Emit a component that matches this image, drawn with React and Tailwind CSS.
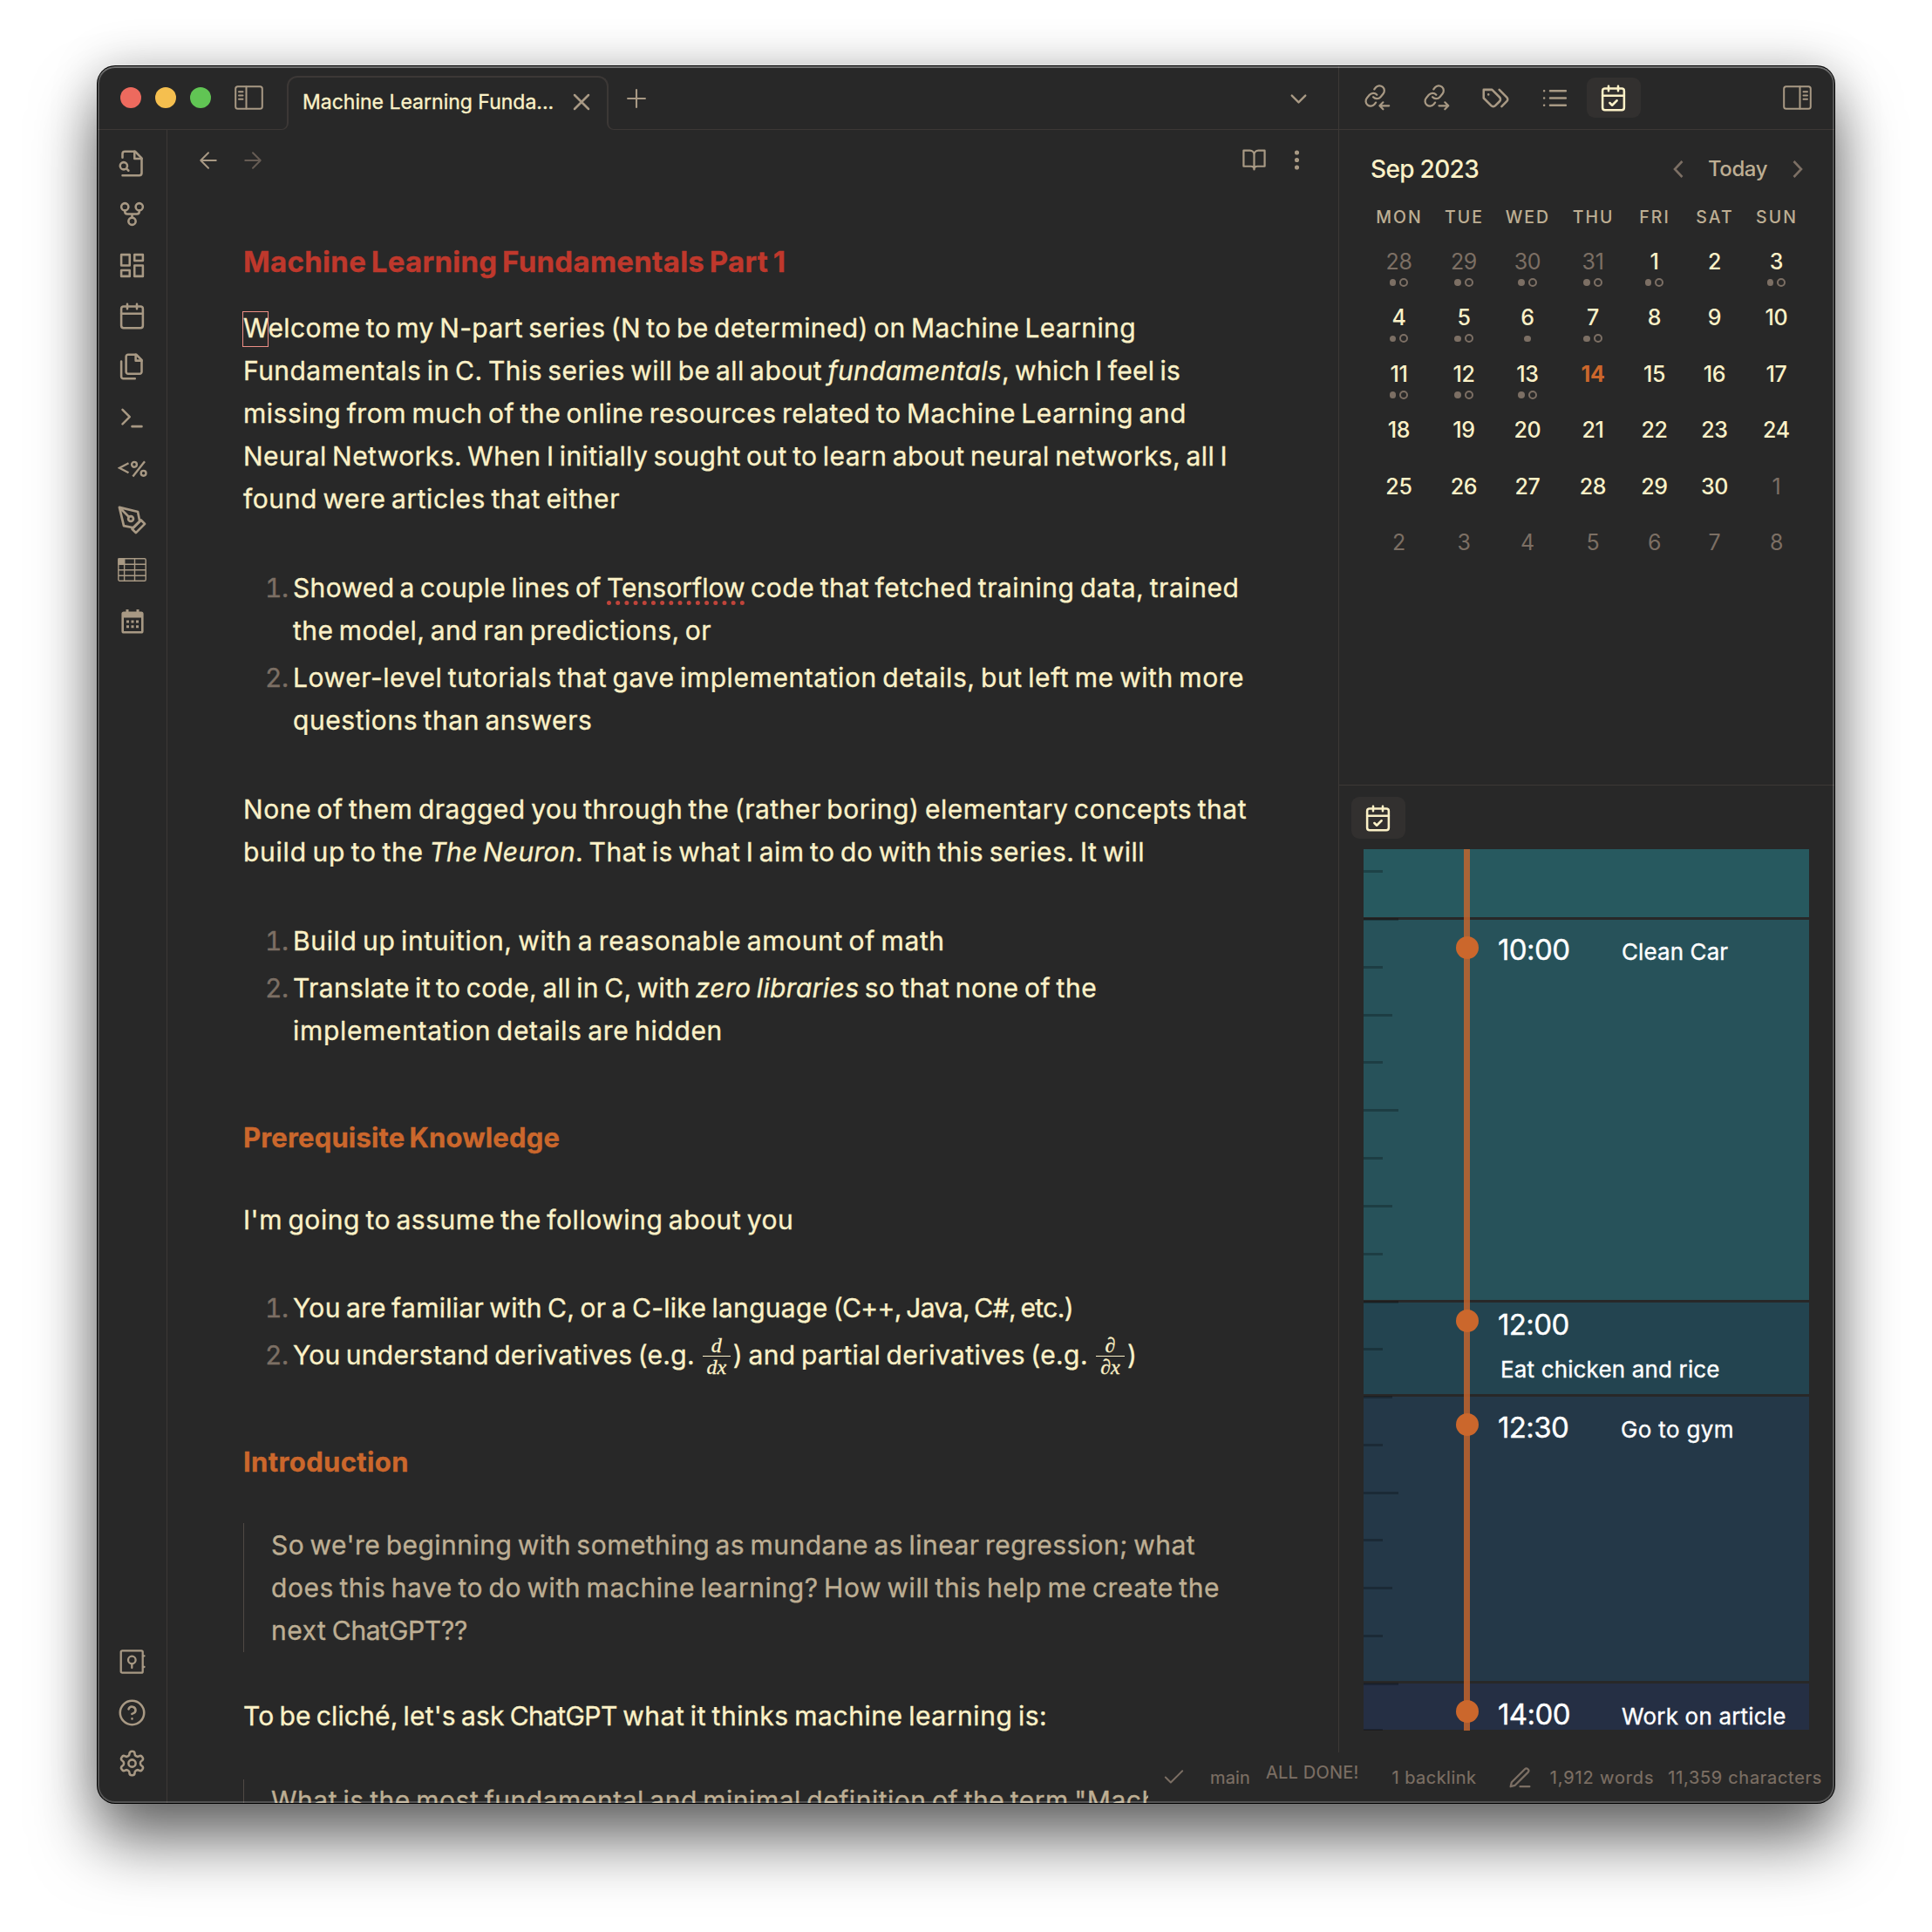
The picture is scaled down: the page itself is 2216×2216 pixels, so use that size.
import React from 'react';

const Svg = ({ size = 33, sw = 1.85, children, className = '', ...rest }) => (
  <svg width={size} height={size} viewBox="0 0 24 24" fill="none" stroke="currentColor" strokeWidth={sw} strokeLinecap="round" strokeLinejoin="round" className={`shrink-0 ${className}`} {...rest}>
    {children}
  </svg>
);

const CalendarBase = () => (
  <>
    <rect x="3" y="4" width="18" height="18" rx="2" />
    <path d="M16 2v4M8 2v4M3 10h18" />
  </>
);

const CalendarCheck = () => (
  <Svg className="-ml-px">
    <CalendarBase />
    <path d="m9 16 2 2 4-4" />
  </Svg>
);

const LinkArrow = ({ out }) => (
  <svg width="30" height="28" viewBox="0 0 30 28" fill="none" stroke="currentColor" strokeWidth="2.2" strokeLinecap="round" strokeLinejoin="round" className="-ml-[2px] overflow-visible">
    <g transform="translate(13.2 12) rotate(-5) scale(1.12) translate(-12 -12)" strokeWidth="2">
      <path d="M10 13a5 5 0 0 0 7.54.54l3-3a5 5 0 0 0-7.07-7.07l-1.72 1.71" />
      <path d="M14 11a5 5 0 0 0-7.54-.54l-3 3a5 5 0 0 0 7.07 7.07l1.71-1.71" />
    </g>
    {out ? <path d="M18.5 23.3H29M25.3 19.3l4 4-4 4" /> : <path d="M18.7 23.3h10.500M22.400 19.300l-4 4 4 4" />}
  </svg>
);

const PanelIcon = ({ right }) => (
  <svg width="33" height="28" viewBox="0 0 33 28" fill="none" stroke="currentColor" strokeWidth="2" strokeLinecap="round">
    <g transform={right ? 'translate(33 0) scale(-1 1)' : undefined}>
      <rect x="1.2" y="1.2" width="30.6" height="25.6" rx="2.5" />
      <path d="M13.5 1.5v25" />
      <path d="M5 7.3h4.5M5 11.6h4.5M5 15.8h4.5" />
    </g>
  </svg>
);

const ribbonTop = [
  <Svg key="search">
    <path d="M4 22h14a2 2 0 0 0 2-2V7.5L14.5 2H6a2 2 0 0 0-2 2v3" />
    <path d="M14 2v6h6" />
    <circle cx="5" cy="14" r="3" />
    <path d="m9 18-1.5-1.5" />
  </Svg>,
  <Svg key="fork">
    <circle cx="12" cy="18" r="3" />
    <circle cx="6" cy="6" r="3" />
    <circle cx="18" cy="6" r="3" />
    <path d="M18 9v1a2 2 0 0 1-2 2H8a2 2 0 0 1-2-2V9M12 12v3" />
  </Svg>,
  <Svg key="board">
    <rect x="3" y="3" width="7" height="9" />
    <rect x="14" y="3" width="7" height="5" />
    <rect x="14" y="12" width="7" height="9" />
    <rect x="3" y="16" width="7" height="5" />
  </Svg>,
  <Svg key="cal"><CalendarBase /></Svg>,
  <Svg key="files">
    <path d="M15.5 2H8.6c-.4 0-.8.2-1.1.5-.3.3-.5.7-.5 1.1v12.8c0 .4.2.8.5 1.1.3.3.7.5 1.1.5h9.8c.4 0 .8-.2 1.1-.5.3-.3.5-.7.5-1.1V6.5L15.5 2z" />
    <path d="M3 7.6v12.8c0 .4.2.8.5 1.1.3.3.7.5 1.1.5h9.8M15 2v5h5" />
  </Svg>,
  <Svg key="term"><path d="m4 17 6-6-6-6M12 19h8" /></Svg>,
  <svg key="tmpl" width="34" height="20" viewBox="0 0 34 20" fill="none" stroke="currentColor" strokeWidth="2.4">
    <path d="M12.5 3.2 2 8.7l10.5 5.5" />
    <circle cx="19" cy="4.8" r="2.9" />
    <circle cx="29.6" cy="14.8" r="2.9" />
    <path d="M31 1.2 17.4 18.6" />
  </svg>,
  <Svg key="pen" size={35}>
    <path d="m12 19 7-7 3 3-7 7-3-3z" />
    <path d="M18 13l-1.5-7.5L2 2l3.5 14.5L13 18l5-5zM2 2l7.586 7.586" />
    <circle cx="11" cy="11" r="2" />
  </Svg>,
  <svg key="table" width="33" height="27" viewBox="0 0 33 27" fill="none" stroke="currentColor" strokeWidth="1.4" className="relative -top-[1px]">
    <rect x="0.8" y="0.8" width="31.4" height="25.4" rx="1.5" />
    <path d="M1 1h6.5v6H1z" fill="currentColor" />
    <path d="M7.6 1v25M19.5 1v25M1 7.2h31M1 13.8h31M1 20.2h31" />
  </svg>,
  <svg key="cal2" width="26" height="28" viewBox="0 0 26 28" fill="currentColor">
    <path fillRule="evenodd" d="M5.5 0h3v2.5h9V0h3v2.5H23a2.6 2.6 0 0 1 2.6 2.6V25A2.6 2.6 0 0 1 23 27.6H3A2.6 2.6 0 0 1 .4 25V5.1A2.6 2.6 0 0 1 3 2.5h2.5zM3 9.5V25h20V9.5z" />
    <path d="M6 12.5h3v3H6zM11.5 12.5h3v3h-3zM17 12.5h3v3h-3zM6 18.3h3v3H6zM11.5 18.3h3v3h-3zM17 18.3h3v3h-3z" />
  </svg>,
];

const ribbonBottom = [
  <svg key="vault" width="30" height="28" viewBox="0 0 30 28" fill="none" stroke="currentColor" strokeWidth="2.3" strokeLinecap="round" strokeLinejoin="round">
    <rect x="1.7" y="1.3" width="25" height="25.4" rx="1.5" />
    <circle cx="14.3" cy="12" r="4.3" />
    <path d="M14.3 16.5v4.5M27 7.3h1.5M27 20h1.5" />
  </svg>,
  <Svg key="help">
    <circle cx="12" cy="12" r="10" />
    <path d="M9.09 9a3 3 0 0 1 5.83 1c0 2-3 3-3 3M12 17h.01" />
  </Svg>,
  <Svg key="gear">
    <path d="M12.22 2h-.44a2 2 0 0 0-2 2v.18a2 2 0 0 1-1 1.73l-.43.25a2 2 0 0 1-2 0l-.15-.08a2 2 0 0 0-2.73.73l-.22.38a2 2 0 0 0 .73 2.73l.15.1a2 2 0 0 1 1 1.72v.51a2 2 0 0 1-1 1.74l-.15.09a2 2 0 0 0-.73 2.73l.22.38a2 2 0 0 0 2.73.73l.15-.08a2 2 0 0 1 2 0l.43.25a2 2 0 0 1 1 1.73V20a2 2 0 0 0 2 2h.44a2 2 0 0 0 2-2v-.18a2 2 0 0 1 1-1.73l.43-.25a2 2 0 0 1 2 0l.15.08a2 2 0 0 0 2.73-.73l.22-.39a2 2 0 0 0-.73-2.73l-.15-.08a2 2 0 0 1-1-1.74v-.5a2 2 0 0 1 1-1.74l.15-.09a2 2 0 0 0 .73-2.73l-.22-.38a2 2 0 0 0-2.73-.73l-.15.08a2 2 0 0 1-2 0l-.43-.25a2 2 0 0 1-1-1.73V4a2 2 0 0 0-2-2z" />
    <circle cx="12" cy="12" r="3" />
  </Svg>,
];

const Ribbon = () => (
  <nav className="flex w-[80px] shrink-0 flex-col border-r border-[#3c3836] pt-[9px] pb-[16px] text-[#a89984]">
    {ribbonTop.map((icon, i) => (
      <div key={i} className="flex h-[58.45px] items-center justify-center">{icon}</div>
    ))}
    <div className="mt-auto">
      {ribbonBottom.map((icon, i) => (
        <div key={i} className="flex h-[58.6px] items-center justify-center">{icon}</div>
      ))}
    </div>
  </nav>
);

const TitleBar = () => (
  <header className="flex h-[73px] shrink-0 border-b border-[#3c3836] pl-[26px] text-[#a89984]">
    <div className="flex h-[72px] items-center gap-4">
      <span className="size-6 rounded-full bg-[#ed6a5e]" />
      <span className="size-6 rounded-full bg-[#f5bf4f]" />
      <span className="size-6 rounded-full bg-[#61c554]" />
      <span className="ml-[11px]"><PanelIcon /></span>
    </div>
    <div className="relative mt-[11px] -mb-px ml-[27px] flex w-[369px] items-center rounded-t-[12px] border-2 border-b-0 border-[#3c3836] bg-[#282828] pl-[16px]">
      <span className="absolute bottom-0 -left-[10px] h-[9px] w-[10px] bg-[#282828]"><span className="block size-full rounded-br-[8px] border-r-2 border-b border-[#3c3836]" /></span>
      <span className="absolute -right-[10px] bottom-0 h-[9px] w-[10px] bg-[#282828]"><span className="block size-full rounded-bl-[8px] border-b border-l-2 border-[#3c3836]" /></span>
      <span className="relative -top-[2px] text-[23px] whitespace-nowrap text-[#fbf1c7]">Machine Learning Funda...</span>
      <Svg size={32} sw={1.9} className="relative -top-[2px] mr-[13px] ml-auto"><path d="M18 6 6 18M6 6l12 12" /></Svg>
    </div>
    <div className="flex h-[74px] flex-1 items-center justify-between pr-[30px] pl-[15px]">
      <Svg size={34} sw={1.5}><path d="M12 5v14M5 12h14" /></Svg>
      <Svg size={31}><path d="m6 9 6 6 6-6" /></Svg>
    </div>
  </header>
);

const L = ({ h = 'h-[49px]', c = '', children }) => (
  <div className={`flex items-center whitespace-nowrap ${h}`}>
    <span className={c}>{children}</span>
  </div>
);

const Item = ({ n, children, className = '' }) => (
  <li className={`flex ${className}`}>
    <span className="w-[57px] shrink-0 pl-[25px] leading-[49px] tracking-[-0.5px] text-[#7c6f64] tabular-nums">{n}.</span>
    <div>{children}</div>
  </li>
);

const Frac = ({ top, bottom, className }) => (
  <span className={`relative top-[1px] inline-flex flex-col items-center align-middle font-['Liberation_Serif'] text-[24px] leading-[24px] tracking-normal italic ${className}`}>
    <span className="h-[24px]">{top}</span>
    <span className="h-px w-full bg-[#fbf1c7]" />
    <span className="h-[24px]">{bottom}</span>
  </span>
);

const Note = () => (
  <article className="h-0 flex-1 overflow-hidden pt-[58px] pl-[87px] text-[30px] text-[#fbf1c7] [word-spacing:-2.5px]">
    <h1 className="text-[33px] font-bold text-[#bf382c]"><L c="tracking-[0.3px]">Machine Learning Fundamentals Part 1</L></h1>
    <div className="mt-[26px]">
      <L h="h-[50px]" c="tracking-[0.39px]"><span className="relative"><span className="absolute -top-[1px] -left-[1px] h-[41px] w-[30px] border border-[#ee8f86]" />W</span>elcome to my N-part series (N to be determined) on Machine Learning</L>
      <L c="tracking-[0.46px]">Fundamentals in C. This series will be all about <i className="tracking-[0.3px]">fundamentals</i><span className="tracking-[0.28px]">, which I feel is</span></L>
      <L c="tracking-[0.525px]">missing from much of the online resources related to Machine Learning and</L>
      <L c="tracking-[0.421px]">Neural Networks. When I initially sought out to learn about neural networks, all I</L>
      <L c="tracking-[0.571px]">found were articles that either</L>
    </div>
    <ol className="mt-[53.4px]">
      <Item n="1">
        <L c="tracking-[0.34px]">Showed a couple lines of <span className="tracking-[0.04px] underline decoration-[#c0443a] decoration-dotted decoration-[5px] underline-offset-[4px]">Tensorflow</span><span className="tracking-[0.54px]"> code that fetched training data, trained</span></L>
        <L c="tracking-[0.425px]">the model, and ran predictions, or</L>
      </Item>
      <Item n="2" className="mt-[5px]">
        <L c="tracking-[0.575px]">Lower-level tutorials that gave implementation details, but left me with more</L>
        <L c="tracking-[0.56px]">questions than answers</L>
      </Item>
    </ol>
    <div className="mt-[52px]">
      <L h="h-[50px]" c="tracking-[0.527px]">None of them dragged you through the (rather boring) elementary concepts that</L>
      <L c="tracking-[0.75px]">build up to the <i className="tracking-[0.3px]">The Neuron</i><span className="tracking-[0.5px]">. That is what I aim to do with this series. It will</span></L>
    </div>
    <ol className="mt-[52.6px]">
      <Item n="1"><L c="tracking-[0.64px]">Build up intuition, with a reasonable amount of math</L></Item>
      <Item n="2" className="mt-[5px]">
        <L c="tracking-[0.36px]">Translate it to code, all in C, with <i>zero libraries</i><span className="tracking-[0.5px]"> so that none of the</span></L>
        <L c="tracking-[0.676px]">implementation details are hidden</L>
      </Item>
    </ol>
    <h2 className="mt-[74px] text-[31px] font-bold text-[#cb672c]"><L c="tracking-[0.18px]">Prerequisite Knowledge</L></h2>
    <div className="mt-[45px]"><L c="tracking-[0.54px]">I'm going to assume the following about you</L></div>
    <ol className="mt-[52px]">
      <Item n="1"><L c="tracking-[0.29px]">You are familiar with C, or a C-like language <span className="tracking-[-0.6px]">(C++, Java, C#, etc.)</span></L></Item>
      <Item n="2" className="mt-[5.5px]">
        <div className="flex h-[49px] items-center whitespace-nowrap">
          <span className="tracking-[0.28px]">You understand derivatives (e.g.</span>
          <Frac top="d" bottom="dx" className="ml-[9px] w-[32px]" />
          <span className="ml-[3px] tracking-[0.39px]">) and partial derivatives (e.g.</span>
          <Frac top="∂" bottom="∂x" className="ml-[9px] w-[33px]" />
          <span className="ml-[3px]">)</span>
        </div>
      </Item>
    </ol>
    <h2 className="mt-[73px] text-[31px] font-bold text-[#cb672c]"><L c="tracking-[0.38px]">Introduction</L></h2>
    <blockquote className="mt-[46px] border-l border-[#504945] pl-[31px] text-[#bdae93]">
      <L h="h-[49.3px]" c="tracking-[0.471px]">So we're beginning with something as mundane as linear regression; what</L>
      <L h="h-[49.3px]" c="tracking-[0.556px]">does this have to do with machine learning? How will this help me create the</L>
      <L h="h-[49.3px]" c="tracking-[0.5px]">next <span className="tracking-[-0.3px]">ChatGPT??</span></L>
    </blockquote>
    <div className="mt-[49px]"><L c="tracking-[0.16px]">To be cliché, let's ask <span className="tracking-[-0.6px]">ChatGPT</span><span className="tracking-[0.56px]"> what it thinks machine learning is:</span></L></div>
    <blockquote className="mt-[48px] border-l border-[#504945] pl-[31px] text-[#bdae93]">
      <L c="tracking-[0.525px]">What is the most fundamental and minimal definition of the term "Mach</L>
    </blockquote>
  </article>
);

const Editor = () => (
  <main className="flex min-w-0 flex-1 flex-col">
    <div className="flex h-[69px] shrink-0 items-center pr-[33px] pl-[32px] text-[#a89984]">
      <Svg size={30} sw={1.6}><path d="M19 12H5M12 19l-7-7 7-7" /></Svg>
      <Svg size={30} sw={1.6} className="ml-[21px] text-[#665c54]"><path d="M5 12h14M12 5l7 7-7 7" /></Svg>
      <Svg size={29} className="ml-auto"><path d="M2 3h6a4 4 0 0 1 4 4v14a3 3 0 0 0-3-3H2zM22 3h-6a4 4 0 0 0-4 4v14a3 3 0 0 1 3-3h7z" /></Svg>
      <Svg size={29} className="ml-[20px]"><circle cx="12" cy="5" r="1.2" fill="currentColor" /><circle cx="12" cy="12" r="1.2" fill="currentColor" /><circle cx="12" cy="19" r="1.2" fill="currentColor" /></Svg>
    </div>
    <Note />
  </main>
);

// Each day: [label, tone, dots]; dots: 0 none, 1 filled, 2 filled and open.
const weeks = [
  [['28', 'm', 2], ['29', 'm', 2], ['30', 'm', 2], ['31', 'm', 2], ['1', '', 2], ['2', '', 0], ['3', '', 2]],
  [['4', '', 2], ['5', '', 2], ['6', '', 1], ['7', '', 2], ['8', '', 0], ['9', '', 0], ['10', '', 0]],
  [['11', '', 2], ['12', '', 2], ['13', '', 2], ['14', 't', 0], ['15', '', 0], ['16', '', 0], ['17', '', 0]],
  [['18', '', 0], ['19', '', 0], ['20', '', 0], ['21', '', 0], ['22', '', 0], ['23', '', 0], ['24', '', 0]],
  [['25', '', 0], ['26', '', 0], ['27', '', 0], ['28', '', 0], ['29', '', 0], ['30', '', 0], ['1', 'm', 0]],
  [['2', 'm', 0], ['3', 'm', 0], ['4', 'm', 0], ['5', 'm', 0], ['6', 'm', 0], ['7', 'm', 0], ['8', 'm', 0]],
];
const tone = { m: 'text-[#7c6f64]', t: 'text-[#cb672c] font-bold', '': 'text-[#fbf1c7] font-medium' };
const cols = 'grid grid-cols-[74px_75px_71px_79px_62px_76px_66px]';

const Calendar = () => (
  <section className="h-[751px] shrink-0 pt-[21px] pl-[32px] [-webkit-text-stroke:0]">
    <div className="flex h-[48px] items-center pr-[28px]">
      <span className="ml-[4px] w-[132px] text-[28px] font-medium tracking-[-0.68px] whitespace-nowrap text-[#fbf1c7]">Sep 2023</span>
      <svg width="12" height="20" viewBox="0 0 12 20" fill="none" className="ml-auto text-[#7c6f64]" stroke="currentColor" strokeWidth="2.6"><path d="M10.5 1 2 10l8.5 9" /></svg>
      <span className="ml-[28px] text-[24px] font-medium tracking-[-0.44px] text-[#bdae93]">Today</span>
      <svg width="12" height="20" viewBox="0 0 12 20" fill="none" className="mr-[8px] ml-[29px] text-[#7c6f64]" stroke="currentColor" strokeWidth="2.6"><path d="M1.5 1 10 10l-8.5 9" /></svg>
    </div>
    <div className={`mt-[17px] h-[30px] items-center text-center text-[19.5px] font-medium tracking-[2px] text-[#bdae93] ${cols}`}>
      {['MON', 'TUE', 'WED', 'THU', 'FRI', 'SAT', 'SUN'].map((d) => <span key={d}>{d}</span>)}
    </div>
    <div className="mt-[19px] -ml-[0.5px]">
      {weeks.map((w, i) => (
        <div key={i} className={`h-[64.4px] text-center ${cols}`}>
          {w.map(([n, t, dots], j) => (
            <div key={j}>
              <div className={`text-[25px] leading-[32px] tracking-[-0.3px] ${tone[t]}`}>{n}</div>
              <div className="mt-[3px] flex h-[10px] items-center justify-center gap-[4px]">
                {dots > 0 && <span className="size-[7.5px] rounded-full bg-[#7c6f64]" />}
                {dots > 1 && <span className="size-[10px] rounded-full border-2 border-[#7c6f64]" />}
              </div>
            </div>
          ))}
        </div>
      ))}
    </div>
  </section>
);

const ticks = [
  [24, 22], [78.5, 40], [133.5, 22], [188.5, 33], [243, 22], [298, 40], [353, 22], [407.5, 33], [462.5, 22], [517.5, 40],
  [572, 22], [627, 33], [681.5, 22], [736.5, 40], [791, 22], [846, 33], [900.5, 22], [955.5, 40], [1009, 22],
];

const Slot = ({ time, label, labelClass }) => (
  <div className="flex items-baseline leading-[40px]">
    <span className="w-[142px] shrink-0 text-[33px] tracking-[-0.6px]">{time}</span>
    <span className={`text-[26px] whitespace-nowrap ${labelClass}`}>{label}</span>
  </div>
);

const Timeline = () => (
  <div className="relative mt-[12px] ml-[28px] h-[1011px] w-[511px] shrink-0 overflow-hidden text-white">
    <div className="flex flex-col gap-[3px]">
      <div className="h-[78px] bg-[#27595f]" />
      <div className="h-[436px] bg-[#27525a] pt-[14px] pl-[154px]"><Slot time="10:00" label="Clean Car" labelClass="tracking-[0.1px]" /></div>
      <div className="h-[105px] bg-[#234450] pt-[5px] pl-[154px]">
        <div className="text-[33px] leading-[40px] tracking-[-0.6px]">12:00</div>
        <div className="mt-[12px] pl-[3px] text-[26px] leading-[40px] tracking-[0.15px]">Eat chicken and rice</div>
      </div>
      <div className="h-[326px] bg-[#243848] pt-[15px] pl-[154px]"><Slot time="12:30" label="Go to gym" labelClass="-ml-px tracking-[0.35px]" /></div>
      <div className="h-[53px] bg-[#252f44] pt-[15px] pl-[154px]"><Slot time="14:00" label="Work on article" labelClass="tracking-[0.19px]" /></div>
    </div>
    {ticks.map(([y, w]) => (
      <span key={y} className="absolute left-0 h-[3px] bg-black/25" style={{ top: y, width: w }} />
    ))}
    <span className="absolute top-0 left-[115px] h-full w-[7px] bg-[#cb672c]/80" />
    {[113, 541, 660, 989].map((y) => (
      <span key={y} className="absolute left-[106px] size-[26px] -translate-y-1/2 rounded-full bg-[#cb672c]" style={{ top: y }} />
    ))}
  </div>
);

const RightPane = () => (
  <aside className="flex w-[569px] shrink-0 flex-col border-l border-[#3c3836]">
    <div className="flex h-[73px] shrink-0 items-center border-b border-[#3c3836] pr-[26px] pl-[10px] text-[#a89984]">
      <span className="flex w-[68px] justify-center"><LinkArrow /></span>
      <span className="flex w-[68px] justify-center"><LinkArrow out /></span>
      <span className="flex w-[67px] justify-center"><Svg><path d="M9 5H2v7l6.29 6.29c.94.94 2.48.94 3.42 0l3.58-3.58c.94-.94.94-2.48 0-3.42L9 5ZM6 9.01V9M15 5l6.3 6.3a2.4 2.4 0 0 1 0 3.4L17 19" /></Svg></span>
      <span className="flex w-[68px] justify-center"><Svg><path d="M8 6h13M8 12h13M8 18h13M3 6h.01M3 12h.01M3 18h.01" /></Svg></span>
      <span className="ml-[3px] flex h-[46px] w-[62px] items-center justify-center rounded-[9px] bg-[#32302f] text-[#fbf1c7]"><CalendarCheck /></span>
      <span className="ml-auto"><PanelIcon right /></span>
    </div>
    <Calendar />
    <div className="border-t border-[#3c3836] pt-[13px] pl-[14px]">
      <span className="flex h-[48px] w-[62px] items-center justify-center rounded-[9px] bg-[#32302f] text-[#fbf1c7]"><CalendarCheck /></span>
    </div>
    <Timeline />
  </aside>
);

const StatusBar = () => (
  <footer className="absolute right-0 bottom-0 flex h-[58px] w-[787px] items-center bg-[#282828] pr-[14px] pl-[15px] text-[20px] whitespace-nowrap text-[#7c6f64] [-webkit-text-stroke:0.2px]">
    <Svg size={29} sw={1.6} className="-mt-[1px]"><path d="M20 6 9 17l-5-5" /></Svg>
    <span className="ml-[27px] tracking-[0.15px]">main</span>
    <span className="-mt-[12px] ml-[18px] tracking-[0.2px]">ALL DONE!</span>
    <span className="ml-[38px] tracking-[0.467px]">1 backlink</span>
    <Svg size={29} className="ml-[36px]"><path d="M12 20h9M16.5 3.5a2.12 2.12 0 0 1 3 3L7 19l-4 1 1-4Z" /></Svg>
    <span className="ml-auto tracking-[0.85px]">1,912 words</span>
    <span className="ml-[16px] tracking-[0.7px]">11,359 characters</span>
  </footer>
);

export default function App() {
  return (
    <div className="h-[2216px] w-[2216px] overflow-hidden bg-white pt-[76px] pl-[112px] font-['Inter',sans-serif] [-webkit-text-stroke:0.35px]">
      <div className="relative flex h-[1992px] w-[1992px] overflow-hidden rounded-[20px] bg-[#282828] shadow-[0_0_0_1px_#000,0_44px_72px_rgba(0,0,0,0.56),0_0_56px_rgba(0,0,0,0.2)]">
        <div className="flex min-w-0 flex-1 flex-col">
          <TitleBar />
          <div className="flex min-h-0 flex-1">
            <Ribbon />
            <Editor />
          </div>
        </div>
        <RightPane />
        <StatusBar />
        <div className="pointer-events-none absolute inset-0 rounded-[20px] shadow-[inset_0_0_0_2px_rgba(255,255,255,0.2),inset_0_2px_0_rgba(255,255,255,0.18)]" />
      </div>
    </div>
  );
}
